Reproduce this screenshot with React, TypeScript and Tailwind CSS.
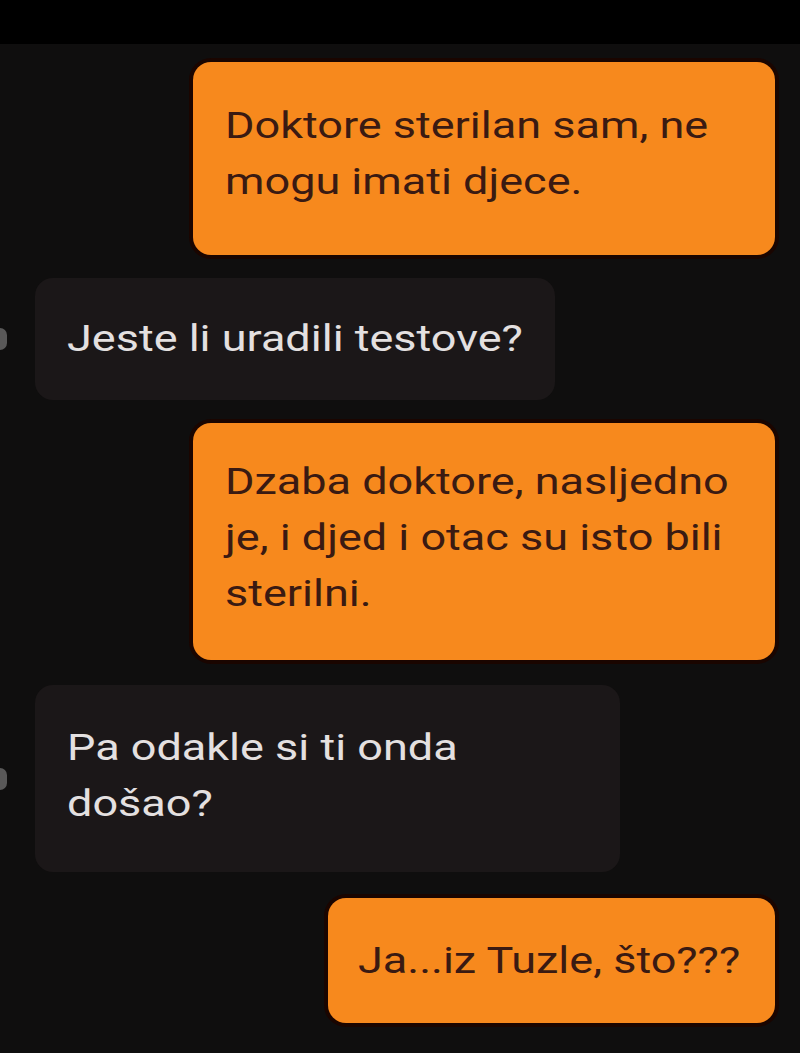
import React from "react";

function Line({ text }: { text: string }) {
  return (
    <div className="leading-[56px] whitespace-nowrap">
      <span className="inline-block origin-left scale-x-[1.25]">{text}</span>
    </div>
  );
}

function Orange({ lines, className }: { lines: string[]; className: string }) {
  return (
    <div className="flex justify-end pr-[25px]">
      <div
        className={
          "rounded-[18px] bg-[#f7891d] text-[#3a1a12] shadow-[0_0_0_4px_#1a0500] flex flex-col justify-center " +
          className
        }
      >
        {lines.map((l, i) => (
          <Line key={i} text={l} />
        ))}
      </div>
    </div>
  );
}

function Dark({ lines, className }: { lines: string[]; className: string }) {
  return (
    <div className="relative flex justify-start pl-[35px]">
      <div className="absolute left-0 top-1/2 -translate-y-1/2 w-[7px] h-[22px] rounded-r-full bg-[#8a8a8a] opacity-60" />
      <div
        className={
          "rounded-[18px] bg-[#1b1718] text-[#e4e0e0] flex flex-col justify-center " + className
        }
      >
        {lines.map((l, i) => (
          <Line key={i} text={l} />
        ))}
      </div>
    </div>
  );
}

export default function App() {
  return (
    <div
      className="w-[800px] h-[1053px] bg-[#0f0e0e] overflow-hidden text-[36px]"
      style={{ fontFamily: "Roboto, 'Noto Sans', sans-serif" }}
    >
      <div className="h-[44px] bg-black" />
      <div className="flex flex-col pt-[18px]">
        <Orange
          lines={["Doktore sterilan sam, ne", "mogu imati djece."]}
          className="w-[582px] h-[193px] pl-[32px] pb-[10px]"
        />
        <div className="h-[23px]" />
        <Dark lines={["Jeste li uradili testove?"]} className="w-[520px] h-[122px] pl-[32px]" />
        <div className="h-[23px]" />
        <Orange
          lines={["Dzaba doktore, nasljedno", "je, i djed i otac su isto bili", "sterilni."]}
          className="w-[582px] h-[237px] pl-[32px] pb-[8px]"
        />
        <div className="h-[25px]" />
        <Dark
          lines={["Pa odakle si ti onda", "došao?"]}
          className="w-[585px] h-[187px] pl-[32px] pb-[6px]"
        />
        <div className="h-[26px]" />
        <Orange lines={["Ja...iz Tuzle, što???"]} className="w-[447px] h-[125px] pl-[30px]" />
      </div>
    </div>
  );
}
